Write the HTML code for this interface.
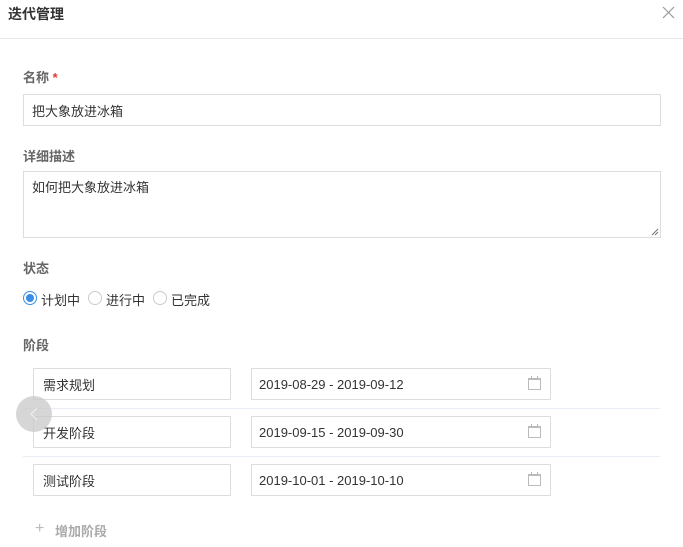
<!DOCTYPE html>
<html><head><meta charset="utf-8"><style>
*{box-sizing:border-box;margin:0;padding:0}
body{width:683px;height:547px;overflow:hidden;background:#fff;font-family:"Liberation Sans","Noto Sans CJK SC",sans-serif;font-size:13px;color:#333;position:relative}
.a{position:absolute}
.lbl{color:#666;font-size:13px;font-weight:bold}
.box{position:absolute;border:1px solid #ddd;background:#fff;padding-left:9px;display:flex;align-items:center;font-size:13px;color:#333}
.sep{position:absolute;left:23px;width:637px;height:1px;background:#e8ecf4}
.cal{position:absolute;right:9px;top:9px;width:13px;height:12px;border:1px solid #bbb;border-top-width:2px}
.cal:before,.cal:after{content:"";position:absolute;top:-4px;width:1px;height:3px;background:#bbb}
.cal:before{left:2px}.cal:after{right:2px}
.rad{position:absolute;width:14px;height:14px;border:1px solid #ccc;border-radius:50%}
</style></head><body>
<div class="a" style="left:8px;top:4px;font-size:14px;font-weight:bold;color:#333">迭代管理</div>
<svg class="a" style="left:662px;top:6px" width="13" height="13"><path d="M1 1L12 12M12 1L1 12" stroke="#999" stroke-width="1.2"/></svg>
<div class="a" style="left:0;top:38px;width:683px;height:1px;background:#e6e6e6"></div>

<div class="a lbl" style="left:23px;top:67px">名称 <span style="color:#e4393c">*</span></div>
<div class="box" style="left:23px;top:94px;width:638px;height:32px;padding-left:8px">把大象放进冰箱</div>

<div class="a lbl" style="left:23px;top:146px">详细描述</div>
<div class="box" style="left:23px;top:171px;width:638px;height:67px;align-items:flex-start;padding-top:5px;padding-left:8px">如何把大象放进冰箱
<svg class="a" style="right:1px;bottom:1px" width="8" height="8"><path d="M7 1L1 7M7 4L4 7" stroke="#777"/></svg></div>

<div class="a lbl" style="left:23px;top:258px">状态</div>
<div class="rad" style="left:23px;top:291px;border-color:#3a8ee6"><div style="position:absolute;left:2px;top:2px;width:8px;height:8px;border-radius:50%;background:#3a8ee6"></div></div>
<div class="a" style="left:41px;top:290px">计划中</div>
<div class="rad" style="left:88px;top:291px"></div>
<div class="a" style="left:106px;top:290px">进行中</div>
<div class="rad" style="left:153px;top:291px"></div>
<div class="a" style="left:171px;top:290px">已完成</div>

<div class="a lbl" style="left:23px;top:335px">阶段</div>

<div class="box" style="left:33px;top:368px;width:198px;height:32px">需求规划</div>
<div class="box" style="left:251px;top:368px;width:300px;height:32px;padding-left:7px">2019-08-29 - 2019-09-12<div class="cal"></div></div>
<div class="sep" style="top:408px"></div>
<div class="box" style="left:33px;top:416px;width:198px;height:32px">开发阶段</div>
<div class="box" style="left:251px;top:416px;width:300px;height:32px;padding-left:7px">2019-09-15 - 2019-09-30<div class="cal"></div></div>
<div class="sep" style="top:456px"></div>
<div class="box" style="left:33px;top:464px;width:198px;height:32px">测试阶段</div>
<div class="box" style="left:251px;top:464px;width:300px;height:32px;padding-left:7px">2019-10-01 - 2019-10-10<div class="cal"></div></div>

<div class="a" style="left:16px;top:396px;width:36px;height:36px;border-radius:50%;background:rgba(200,200,200,0.75)"></div>
<svg class="a" style="left:28px;top:406px" width="12" height="16"><path d="M9 2L3 8L9 14" stroke="#eee" stroke-width="1.2" fill="none"/></svg>

<div class="a" style="left:35px;top:520px;color:#bbb;font-size:16px;line-height:18px">+</div>
<div class="a" style="left:55px;top:521px;color:#aaa;font-weight:bold">增加阶段</div>
</body></html>
